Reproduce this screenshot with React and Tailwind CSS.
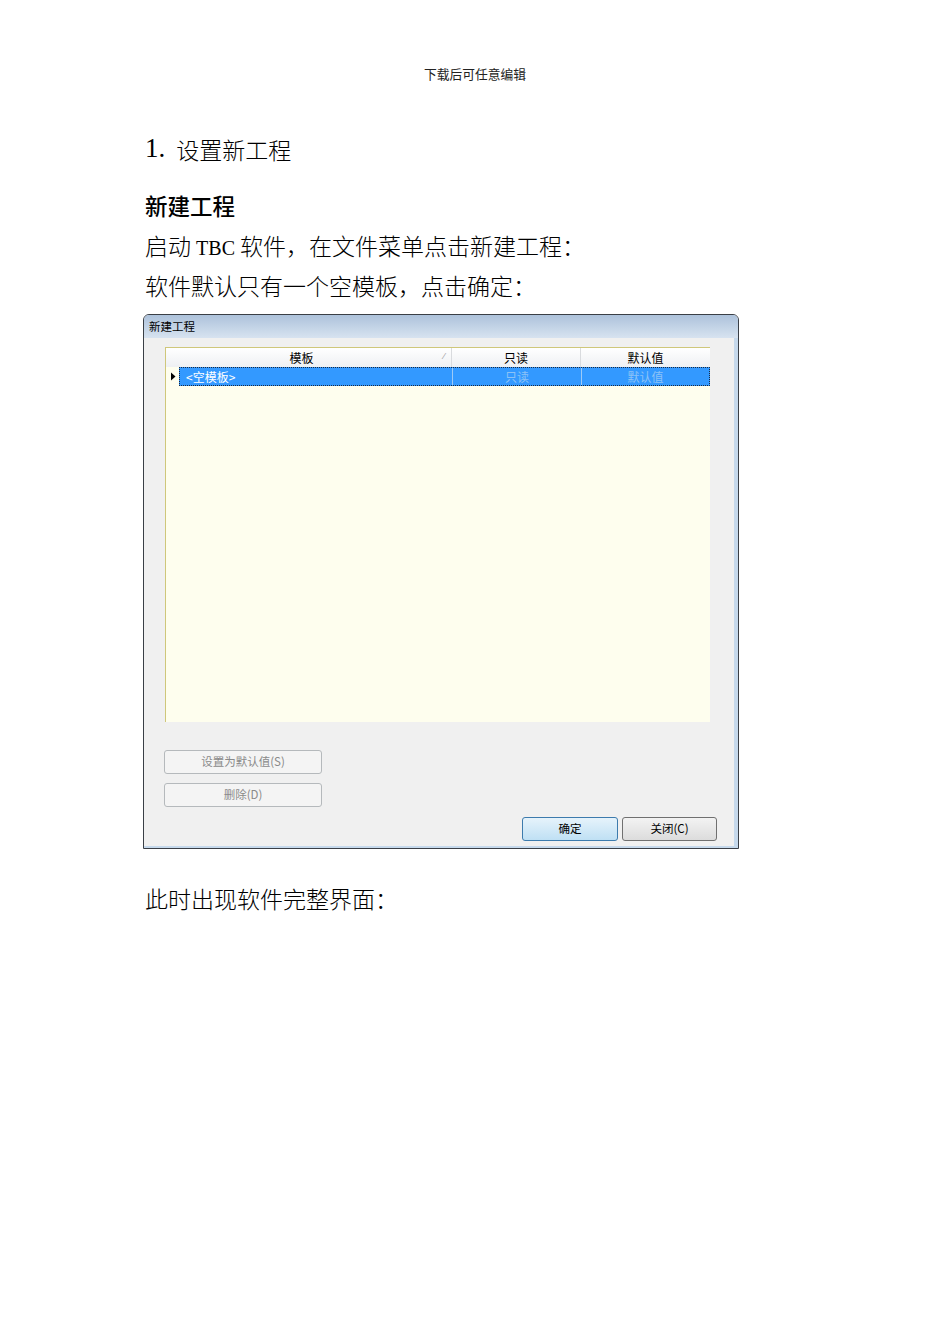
const cjk = { fontFamily: '"Noto Sans CJK SC", "Noto Sans", sans-serif' };
const ui = { fontFamily: '"Noto Sans CJK SC", "Liberation Sans", sans-serif' };

function DisabledButton({ children }) {
  return (
    <div className="flex h-[24px] w-[158px] items-center justify-center rounded-[3px] border border-[#b5b9bc] bg-[#f4f4f4] text-[11.5px] text-[#8a8a8a]">
      {children}
    </div>
  );
}

function NewProjectDialog() {
  return (
    <div
      className="flex h-[535px] w-[596px] flex-col overflow-hidden rounded-t-[6px] border border-[#3a3f46] bg-[#f0f0f0]"
      style={ui}
    >
      {/* title bar */}
      <div className="flex h-[23px] shrink-0 items-center bg-gradient-to-b from-[#adc2db] to-[#d7e3f0] pl-[5px] text-[11.5px] text-black">
        新建工程
      </div>
      {/* client area + glass frame on right/bottom */}
      <div className="flex flex-1 border-r-[4px] border-b-[2px] border-[#c6d9ec]">
        <div className="flex flex-1 flex-col bg-[#f0f0f0] pl-[21px] pt-[9px] pb-[5px]">
          {/* template grid */}
          <div className="flex h-[375px] w-[545px] flex-col border-l border-t border-[#cfc77a] bg-[#fefeee]">
            <div className="flex h-[19px] bg-gradient-to-b from-white to-[#eef0f3] text-[12px] text-black">
              <div className="relative flex w-[286px] items-center justify-center border-r border-[#d9dbde] pr-[14px]">
                模板
                <span className="absolute right-[6px] top-[1px] text-[9px] text-[#9a9a9a]">⁄</span>
              </div>
              <div className="flex w-[129px] items-center justify-center border-r border-[#d9dbde]">只读</div>
              <div className="flex w-[129px] items-center justify-center">默认值</div>
            </div>
            <div className="flex h-[19px] text-[12px]">
              <div className="flex w-[13px] items-center justify-center bg-[#fefeee]">
                <svg width="6" height="9" viewBox="0 0 6 9">
                  <path d="M1 0.5 L5.5 4.5 L1 8.5 Z" fill="#000" />
                </svg>
              </div>
              <div className="flex flex-1 border border-dotted border-[#1a2a40] bg-[#3399ff]">
                <div className="flex w-[272px] items-center pl-[6px] text-white">&lt;空模板&gt;</div>
                <div className="flex w-[129px] items-center justify-center border-l border-[#9dcaf6] text-[#8cc2f7]">只读</div>
                <div className="flex flex-1 items-center justify-center border-l border-[#9dcaf6] text-[#8cc2f7]">默认值</div>
              </div>
            </div>
          </div>

          <div className="mt-[28px] -ml-[1px]">
            <DisabledButton>设置为默认值(S)</DisabledButton>
          </div>
          <div className="mt-[9px] -ml-[1px]">
            <DisabledButton>删除(D)</DisabledButton>
          </div>

          <div className="mt-[10px] flex justify-end gap-[4px] pr-[17px]">
            <div className="flex h-[24px] w-[96px] items-center justify-center rounded-[3px] border border-[#3d7bad] bg-gradient-to-b from-[#e6f3fb] to-[#bfe0f4] text-[11.5px] text-black">
              确定
            </div>
            <div className="flex h-[24px] w-[95px] items-center justify-center rounded-[3px] border border-[#707070] bg-gradient-to-b from-[#f3f3f3] to-[#dcdcdc] text-[11.5px] text-black">
              关闭(C)
            </div>
          </div>
        </div>
      </div>
    </div>
  );
}

export default function App() {
  return (
    <div className="min-h-[1344px] w-[950px] bg-white text-black" style={cjk}>
      <div className="pt-[66px] text-center text-[12.75px] leading-[16px] text-[#222]">下载后可任意编辑</div>

      <div className="pl-[145px]">
        <h1 className="mt-[50px] flex h-[32px] items-center font-light">
          <span className="text-[27px]" style={{ fontFamily: '"Liberation Serif", serif' }}>1.</span>
          <span className="ml-[11px] pt-[3px] text-[23px]">设置新工程</span>
        </h1>

        <h2 className="mt-[21px] h-[40px] text-[22.5px] leading-[40px] font-medium">新建工程</h2>
        <p className="h-[40px] text-[23px] leading-[40px] font-light">
          启动 <span className="text-[20px]" style={{ fontFamily: '"Liberation Serif", serif' }}>TBC</span> 软件，在文件菜单点击新建工程：
        </p>
        <p className="h-[40px] text-[23px] leading-[40px] font-light">软件默认只有一个空模板，点击确定：</p>

        <div className="mt-[9px] -ml-[2px]">
          <NewProjectDialog />
        </div>

        <p className="mt-[29px] h-[40px] text-[23px] leading-[40px] font-light">此时出现软件完整界面：</p>
      </div>
    </div>
  );
}
